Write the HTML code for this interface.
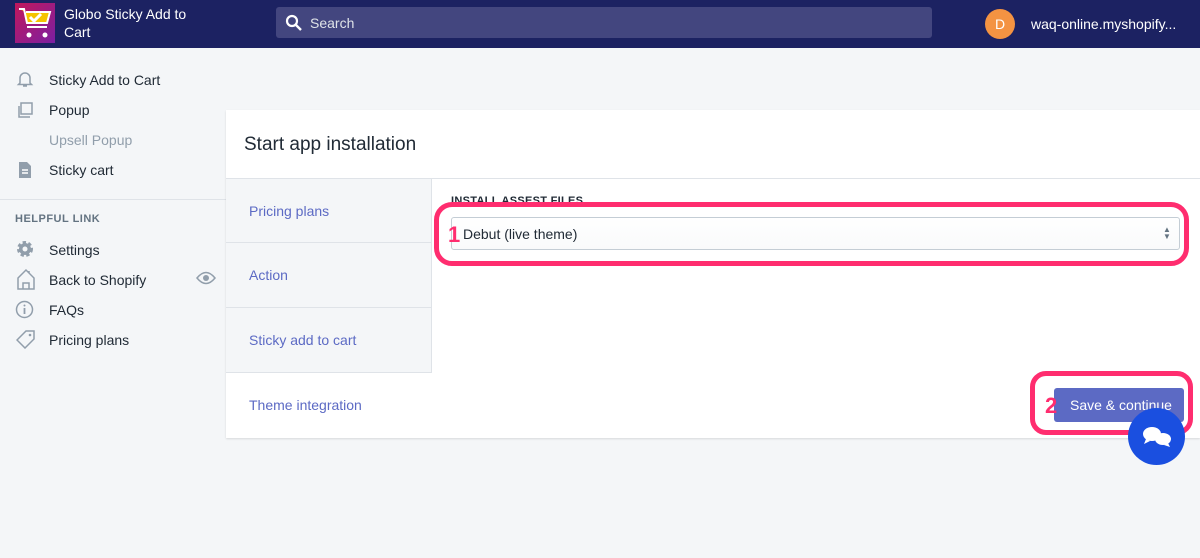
<!DOCTYPE html>
<html><head><meta charset="utf-8"><style>
*{box-sizing:border-box;margin:0;padding:0}
body{width:1200px;height:558px;overflow:hidden;background:#f4f6f8;font-family:"Liberation Sans",sans-serif;position:relative;color:#212b36}
.top{position:absolute;left:0;top:0;width:1200px;height:48px;background:#1c2262}
.abs{position:absolute}
.nav{position:absolute;left:49px;font-size:14px;color:#212b36}
.ic{position:absolute;left:16px}
.tab{position:absolute;left:226px;width:206px;height:65px;background:#f4f6f8;border-bottom:1px solid #dfe3e8;color:#5c6ac4;font-size:14px;padding-left:23px;line-height:65px}
</style></head><body>
<div class="top">
 <div class="abs" style="left:15px;top:3px;width:40px;height:40px;background:linear-gradient(135deg,#c2185b,#7b1fa2)">
  <svg width="40" height="40" viewBox="0 0 40 40"><path d="M4 6h5l3 14h20l3-11H11" fill="#f5c400" stroke="#fff" stroke-width="2"/><path d="M15 14l4 4 7-7" stroke="#fff" stroke-width="3" fill="none"/><circle cx="14" cy="32" r="2.5" fill="#fff"/><circle cx="30" cy="32" r="2.5" fill="#fff"/><path d="M12 24h20" stroke="#fff" stroke-width="2"/></svg>
 </div>
 <div class="abs" style="left:64px;top:5px;color:#fff;font-size:14px;line-height:18px">Globo Sticky Add to<br>Cart</div>
 <div class="abs" style="left:276px;top:7px;width:656px;height:31px;background:#43467f;border-radius:3px">
  <svg class="abs" style="left:9px;top:7px" width="17" height="17" viewBox="0 0 17 17"><circle cx="7" cy="7" r="5" stroke="#fff" stroke-width="2.2" fill="none"/><path d="M11 11l5 5" stroke="#fff" stroke-width="2.4"/></svg>
  <span class="abs" style="left:34px;top:8px;color:#dfe3e8;font-size:14px">Search</span>
 </div>
 <div class="abs" style="left:985px;top:9px;width:30px;height:30px;border-radius:50%;background:#f49342;color:#fff;text-align:center;line-height:30px;font-size:14px">D</div>
 <div class="abs" style="left:1031px;top:16px;color:#fff;font-size:14px">waq-online.myshopify...</div>
</div>
<svg class="ic" style="top:70px" width="18" height="18" viewBox="0 0 18 18"><path d="M4 13V8a5 5 0 0110 0v5l1.5 1.5h-13zM7 16h4" stroke="#919eab" stroke-width="1.5" fill="none"/></svg>
<div class="nav" style="top:72px">Sticky Add to Cart</div>
<svg class="ic" style="top:101px" width="18" height="18" viewBox="0 0 18 18"><rect x="5" y="2" width="11" height="11" stroke="#919eab" stroke-width="1.5" fill="none"/><path d="M3 5v11h11" stroke="#919eab" stroke-width="1.5" fill="none"/></svg>
<div class="nav" style="top:102px">Popup</div>
<div class="nav" style="top:132px;color:#919eab">Upsell Popup</div>
<svg class="ic" style="top:161px" width="18" height="18" viewBox="0 0 18 18"><path d="M3 1h8l4 4v12H3z" fill="#919eab"/><path d="M6 9h6M6 12h6" stroke="#fff" stroke-width="1.4"/></svg>
<div class="nav" style="top:162px">Sticky cart</div>
<div class="abs" style="left:0;top:199px;width:226px;height:1px;background:#dfe3e8"></div>
<div class="abs" style="left:15px;top:213px;font-size:11px;font-weight:bold;color:#637381;letter-spacing:.5px">HELPFUL LINK</div>
<svg class="ic" style="top:240px" width="18" height="18" viewBox="0 0 18 18"><circle cx="9" cy="9" r="6" fill="#919eab" stroke="#919eab" stroke-width="4" stroke-dasharray="3 2.2"/><circle cx="9" cy="9" r="2.5" fill="#f4f6f8"/></svg>
<div class="nav" style="top:242px">Settings</div>
<svg class="ic" style="top:268px" width="20" height="22" viewBox="0 0 20 22"><path d="M2 10L10 2l8 8v11H2zM7 21v-6h6v6M13 3v2" stroke="#919eab" stroke-width="1.5" fill="none"/></svg>
<div class="nav" style="top:272px">Back to Shopify</div>
<svg class="abs" style="left:196px;top:271px" width="20" height="14" viewBox="0 0 20 14"><path d="M1 7q9-11 18 0q-9 11-18 0z" stroke="#919eab" stroke-width="1.5" fill="none"/><circle cx="10" cy="7" r="3" fill="#919eab"/></svg>
<svg class="ic" style="left:15px;top:300px" width="19" height="19" viewBox="0 0 19 19"><circle cx="9.5" cy="9.5" r="8" stroke="#919eab" stroke-width="1.5" fill="none"/><path d="M9.5 8v6" stroke="#919eab" stroke-width="1.8"/><circle cx="9.5" cy="5.5" r="1" fill="#919eab"/></svg>
<div class="nav" style="top:302px">FAQs</div>
<svg class="ic" style="top:329px" width="20" height="20" viewBox="0 0 20 20"><path d="M10 2h8v8l-9 9-8-8z" stroke="#919eab" stroke-width="1.5" fill="none"/><circle cx="14" cy="6" r="1.3" fill="#919eab"/></svg>
<div class="nav" style="top:332px">Pricing plans</div>

<div class="abs" style="left:226px;top:110px;width:974px;height:328px;background:#fff;box-shadow:0 1px 2px rgba(0,0,0,.12)"></div>
<div class="abs" style="left:244px;top:134px;font-size:19px;color:#212b36">Start app installation</div>
<div class="abs" style="left:226px;top:178px;width:974px;height:1px;background:#dfe3e8"></div>
<div class="tab" style="top:179px;height:64px">Pricing plans</div>
<div class="tab" style="top:243px">Action</div>
<div class="tab" style="top:308px">Sticky add to cart</div>
<div class="tab" style="top:373px;background:#fff;border:none">Theme integration</div>
<div class="abs" style="left:431px;top:179px;width:1px;height:194px;background:#dfe3e8"></div>
<div class="abs" style="left:451px;top:195px;font-size:11px;font-weight:bold;color:#212b36;letter-spacing:.3px">INSTALL ASSEST FILES</div>
<div class="abs" style="left:451px;top:217px;width:729px;height:33px;border:1px solid #c4cdd5;border-radius:3px;background:linear-gradient(#fff,#f9fafb)"></div>
<div class="abs" style="left:463px;top:226px;font-size:14px">Debut (live theme)</div>
<div class="abs" style="left:1163px;top:226px;font-size:8px;line-height:7px;color:#637381">▲<br>▼</div>
<div class="abs" style="left:434px;top:202px;width:755px;height:64px;border:5px solid #ff2d6f;border-radius:18px"></div>
<div class="abs" style="left:448px;top:222px;font-size:22px;font-weight:bold;color:#ff2d6f">1</div>
<div class="abs" style="left:1054px;top:388px;width:130px;height:34px;background:#5c6ac4;border-radius:3px;color:#fff;font-size:14px;line-height:34px;padding-left:16px">Save &amp; continue</div>
<div class="abs" style="left:1030px;top:371px;width:163px;height:64px;border:5px solid #ff2d6f;border-radius:16px"></div>
<div class="abs" style="left:1045px;top:393px;font-size:22px;font-weight:bold;color:#ff2d6f">2</div>
<div class="abs" style="left:1128px;top:408px;width:57px;height:57px;border-radius:50%;background:#1a4fe0">
 <svg width="57" height="57" viewBox="0 0 57 57"><ellipse cx="24" cy="26" rx="9" ry="7" fill="#fff"/><path d="M18 31l-2 5 6-3z" fill="#fff"/><ellipse cx="35" cy="31" rx="8" ry="6" fill="#fff"/><path d="M40 35l2 4-6-2z" fill="#fff"/></svg>
</div>
</body></html>
